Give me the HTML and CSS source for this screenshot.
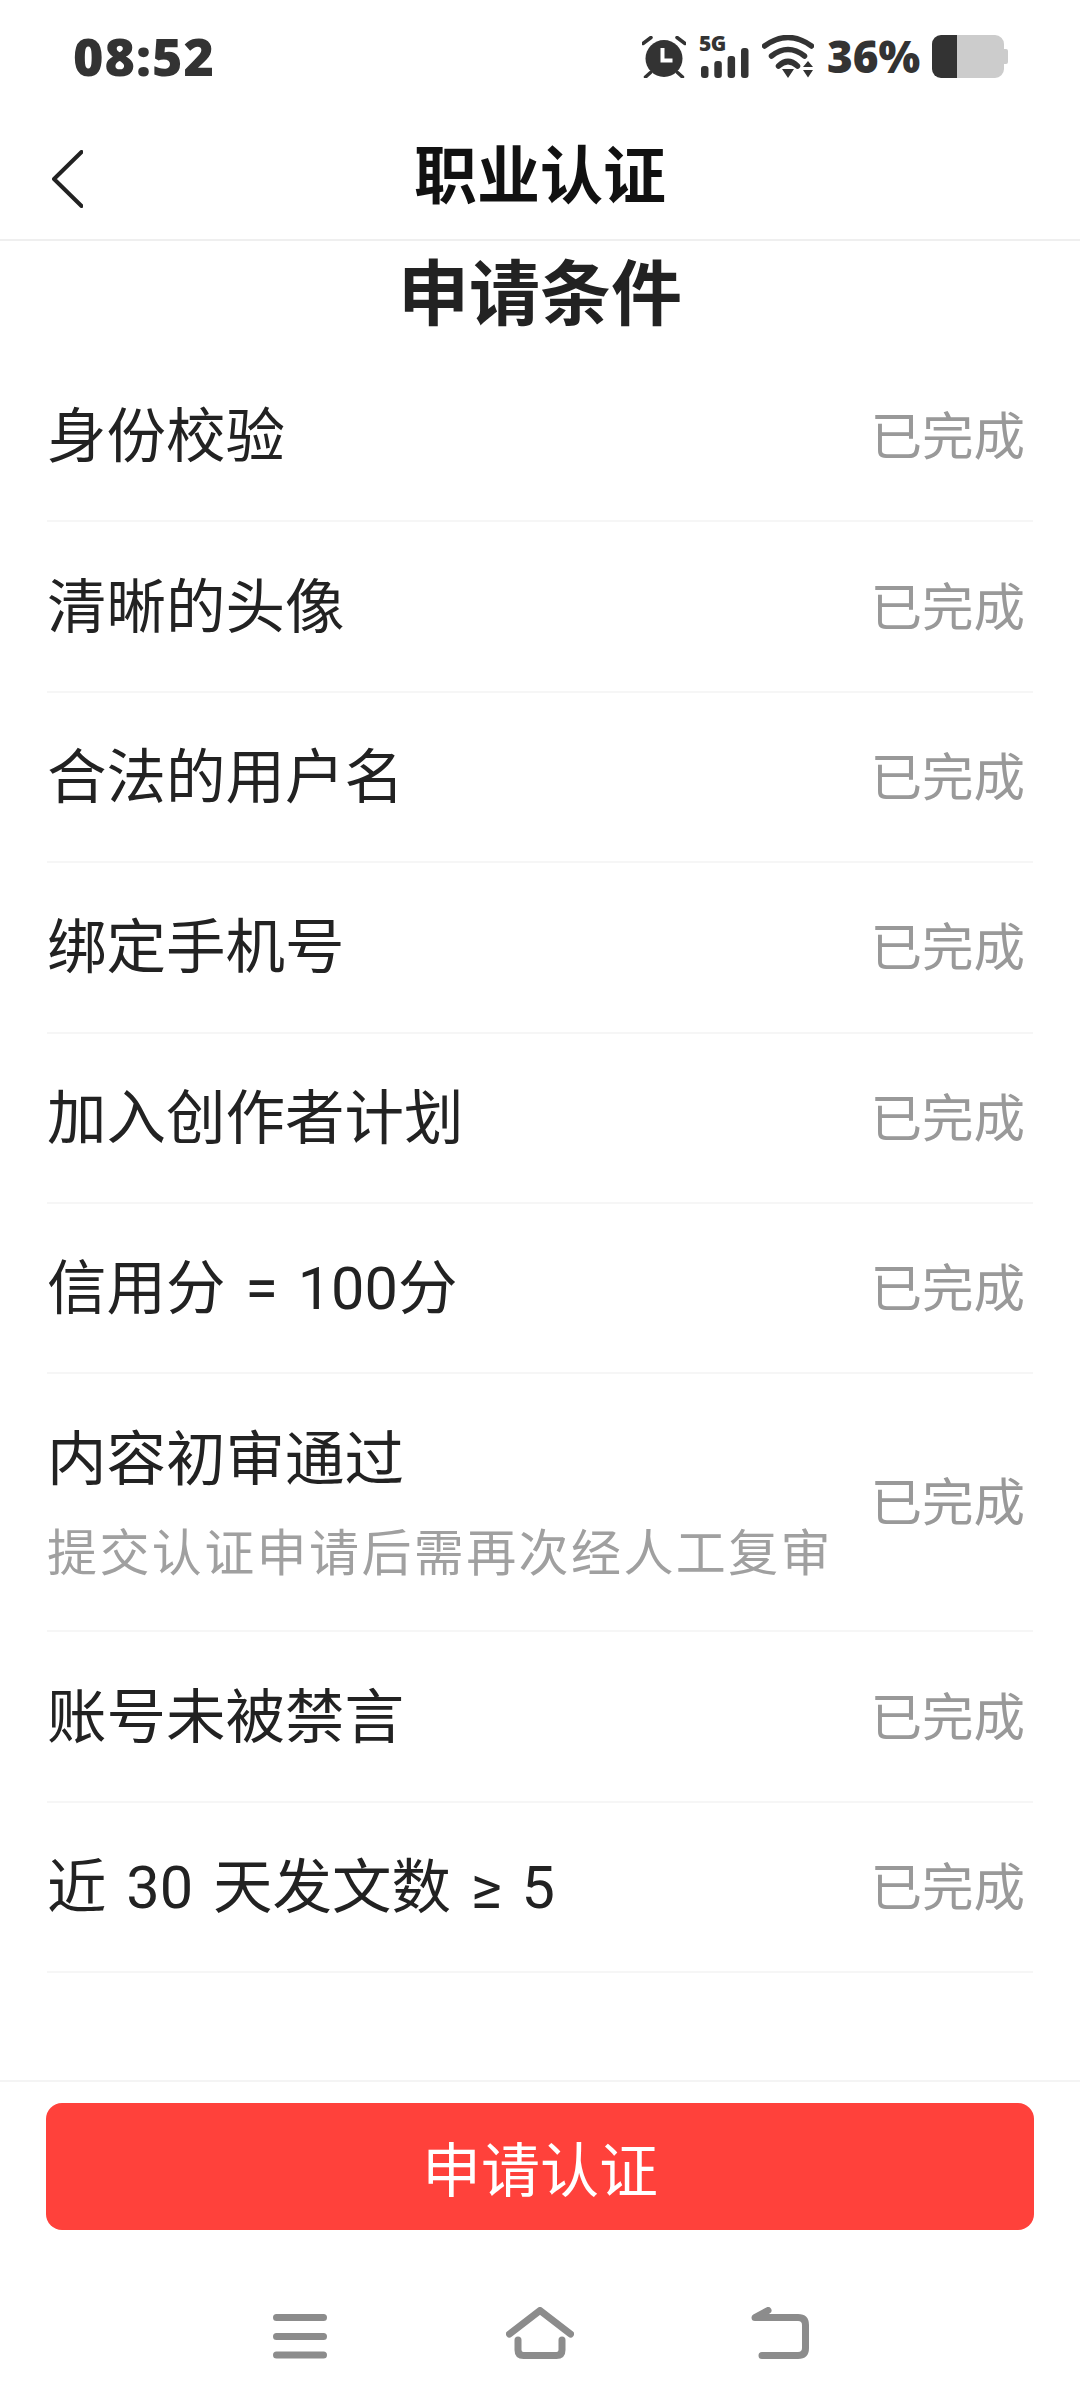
FILE: index.html
```html
<!DOCTYPE html>
<html lang="zh-CN">
<head>
    <meta charset="UTF-8">
    <meta name="viewport" content="width=device-width, initial-scale=1.0">
    <title>职业认证</title>
    <link rel="stylesheet" href="styles.css">
</head>
<body>
    <div class="page">
        <div class="status-bar">
            <span class="time">08:52</span>
            <div class="status-icons">
                <svg class="icon-alarm" viewBox="0 0 44 42" width="44" height="42">
                    <circle cx="22" cy="22.5" r="18.500" fill="#333"/>
                    <path d="M20.500 12v12.500h10" fill="none" stroke="#fff" stroke-width="4"/>
                    <path d="M1 7.500 9 1.500M35 1.500l8 6M3.500 41l5-4.500M40.500 41l-5-4.500" fill="none" stroke="#333" stroke-width="3.500" stroke-linecap="round"/>
                </svg>
                <div class="signal">
                    <span class="five-g">5G</span>
                    <svg viewBox="0 0 50 30" width="50" height="30">
                        <rect x="2" y="18" width="7.500" height="12" rx="3" fill="#333"/>
                        <rect x="15.300" y="13" width="7.500" height="17" rx="3" fill="#333"/>
                        <rect x="28.600" y="8" width="7.500" height="22" rx="3" fill="#333"/>
                        <rect x="42" y="0" width="7.500" height="30" rx="3" fill="#333"/>
                    </svg>
                </div>
                <svg class="icon-wifi" viewBox="0 0 52 43" width="52" height="43">
                    <path d="M2.500 11Q26 -6 49.500 11M9.500 21Q26 8 42.500 21M16.500 31Q26 22 35.500 31" fill="none" stroke="#333" stroke-width="5.500" stroke-linecap="round"/>
                    <path d="M20 34h12l-6 9zM41 32l5-6 5 6zM41 35h10l-5 7.500z" fill="#333"/>
                </svg>
                <span class="battery-pct">36%</span>
                <svg class="icon-battery" viewBox="0 0 76 43" width="76" height="43">
                    <path d="M25 0H63a9 9 0 0 1 9 9v5h2a2 2 0 0 1 2 2v11a2 2 0 0 1-2 2h-2v5a9 9 0 0 1-9 9H25z" fill="#ccc"/>
                    <path d="M25 0H9a9 9 0 0 0-9 9v25a9 9 0 0 0 9 9H25z" fill="#333"/>
                </svg>
            </div>
        </div>

        <div class="top-bar">
            <svg class="back" viewBox="0 0 31 58" width="31" height="58">
                <path d="M29.500 2 2 29l27.500 27" fill="none" stroke="#222" stroke-width="4" stroke-linecap="round" stroke-linejoin="round"/>
            </svg>
            <h1 class="top-title">职业认证</h1>
        </div>

        <h2 class="section-title">申请条件</h2>

        <div class="list">
            <div class="row"><span class="row-name">身份校验</span><span class="row-state">已完成</span></div>
            <div class="row"><span class="row-name">清晰的头像</span><span class="row-state">已完成</span></div>
            <div class="row"><span class="row-name">合法的用户名</span><span class="row-state">已完成</span></div>
            <div class="row"><span class="row-name">绑定手机号</span><span class="row-state">已完成</span></div>
            <div class="row"><span class="row-name">加入创作者计划</span><span class="row-state">已完成</span></div>
            <div class="row"><span class="row-name">信用分 = 100分</span><span class="row-state">已完成</span></div>
            <div class="row row-tall">
                <div class="row-text">
                    <span class="row-name">内容初审通过</span>
                    <span class="row-note">提交认证申请后需再次经人工复审</span>
                </div>
                <span class="row-state">已完成</span>
            </div>
            <div class="row"><span class="row-name">账号未被禁言</span><span class="row-state">已完成</span></div>
            <div class="row"><span class="row-name">近 30 天发文数 ≥ 5</span><span class="row-state">已完成</span></div>
        </div>

        <div class="footer">
            <button class="apply-btn">申请认证</button>
        </div>

        <div class="nav-bar">
            <svg viewBox="0 0 54 45" width="54" height="45">
                <path d="M3.500 3.500h47M3.500 22.500h47M3.500 41h47" fill="none" stroke="#8c8c8c" stroke-width="7" stroke-linecap="round"/>
            </svg>
            <svg viewBox="0 0 68 52" width="68" height="52">
                <path d="M3.500 27 34 3.500 64.500 27" fill="none" stroke="#8c8c8c" stroke-width="7" stroke-linecap="round" stroke-linejoin="round"/>
                <path d="M12 33v10q0 5.500 5.500 5.500h33q5.500 0 5.500-5.500V33" fill="none" stroke="#8c8c8c" stroke-width="7" stroke-linecap="round"/>
            </svg>
            <svg viewBox="0 0 58 52" width="58" height="52">
                <path d="M11 48.500h36q7.500 0 7.500-7.500V18q0-7.500-7.500-7.500H4L17 3.500" fill="none" stroke="#8c8c8c" stroke-width="7" stroke-linecap="round" stroke-linejoin="round"/>
            </svg>
        </div>
    </div>
</body>
</html>
```

FILE: styles.css
```css
* {
    box-sizing: border-box;
}

body {
    margin: 0;
    background: #fff;
    color: #222;
    font-family: "Noto Sans CJK SC", "Noto Sans", sans-serif;
}

.page {
    width: 1080px;
    height: 2400px;
    display: flex;
    flex-direction: column;
    overflow: hidden;
}

.status-bar {
    height: 96px;
    padding: 35px 72px 0 73px;
    display: flex;
    justify-content: space-between;
    align-items: flex-start;
    color: #333;
    font-family: "Open Sans", sans-serif;
    font-weight: 800;
}

.time {
    font-size: 52px;
    line-height: 42px;
    letter-spacing: 1px;
}

.status-icons {
    display: flex;
    align-items: center;
    gap: 13px;
}

.battery-pct {
    font-size: 44px;
    line-height: 43px;
    width: 92px;
}

.signal {
    width: 50px;
    height: 42px;
    display: flex;
    flex-direction: column;
    justify-content: space-between;
}

.five-g {
    font-size: 21px;
    line-height: 12px;
    letter-spacing: -0.5px;
    padding-top: 1px;
    height: 12px;
}

.top-bar {
    height: 145px;
    padding-top: 6px;
    border-bottom: 2px solid #efefef;
    display: flex;
    align-items: center;
    justify-content: center;
    position: relative;
}

.back {
    position: absolute;
    left: 52px;
    top: 54px;
}

.top-title {
    margin: 0;
    font-size: 63px;
    font-weight: 700;
    line-height: 70px;
    color: #111;
}

.section-title {
    margin: 0;
    height: 111px;
    padding-top: 7px;
    text-align: center;
    font-size: 71px;
    line-height: 80px;
    font-weight: 700;
}

.list {
    margin: 0 47px;
}

.row {
    height: 170.4px;
    border-bottom: 2px solid #f6f6f6;
    display: flex;
    align-items: center;
    justify-content: space-between;
    padding: 0 8px 6px 0;
}

.row-tall {
    height: 258px;
}

.row-text {
    display: flex;
    flex-direction: column;
    gap: 24px;
}

.row-name {
    font-family: "Roboto", "Noto Sans CJK SC", sans-serif;
    font-size: 59.5px;
    line-height: 70px;
    word-spacing: 5px;
    margin-top: 8px;
}

.row-text .row-name {
    margin-top: 5px;
}

.row-note {
    font-size: 50px;
    line-height: 60px;
    letter-spacing: 2.4px;
    color: #a0a0a0;
}

.row-state {
    font-size: 51.5px;
    line-height: 60px;
    color: #999;
}

.footer {
    margin-top: auto;
    border-top: 2px solid #f4f4f4;
    padding: 21px 46px 0;
    height: 150px;
}

.apply-btn {
    display: block;
    width: 100%;
    height: 127px;
    border: none;
    border-radius: 16px;
    background: #ff413b;
    color: #fff;
    font-family: inherit;
    font-size: 59px;
}

.nav-bar {
    height: 170px;
    padding-bottom: 41px;
    display: grid;
    grid-template-columns: repeat(3, 240px);
    justify-content: center;
    justify-items: center;
    align-items: end;
}
```
